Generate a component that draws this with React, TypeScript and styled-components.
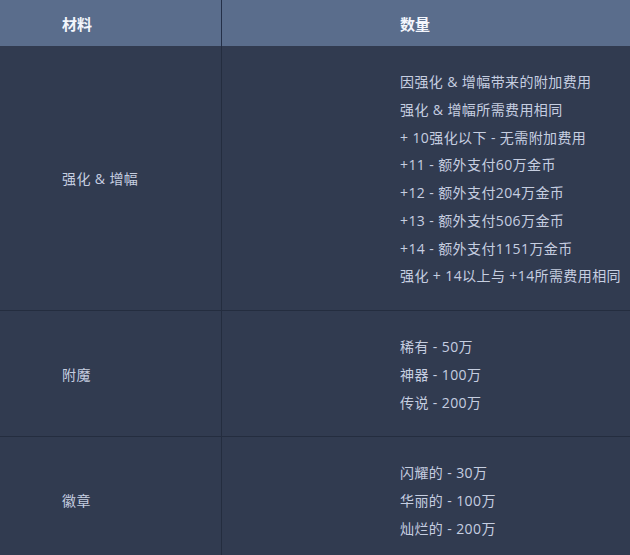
import styled, { createGlobalStyle } from 'styled-components';

const GlobalStyle = createGlobalStyle`
    html, body {
        margin: 0;
        padding: 0;
        background: #313b50;
    }
    body {
        font-family: 'Open Sans', 'Noto Sans CJK SC', sans-serif;
    }
`;

type Row = {
    name: string;
    lines: string[];
};

const rows: Row[] = [
    {
        name: '强化 & 增幅',
        lines: [
            '因强化 & 增幅带来的附加费用',
            '强化 & 增幅所需费用相同',
            '+ 10强化以下 - 无需附加费用',
            '+11 - 额外支付60万金币',
            '+12 - 额外支付204万金币',
            '+13 - 额外支付506万金币',
            '+14 - 额外支付1151万金币',
            '强化 + 14以上与 +14所需费用相同',
        ],
    },
    {
        name: '附魔',
        lines: ['稀有 - 50万', '神器 - 100万', '传说 - 200万'],
    },
    {
        name: '徽章',
        lines: ['闪耀的 - 30万', '华丽的 - 100万', '灿烂的 - 200万'],
    },
];

const App = () => {
    return (
        <>
            <GlobalStyle />
            <Table>
                <HeadRow>
                    <HeadCell>材料</HeadCell>
                    <HeadCell $wide>数量</HeadCell>
                </HeadRow>
                {rows.map((row) => (
                    <BodyRow key={row.name}>
                        <NameCell>{row.name}</NameCell>
                        <ValueCell>
                            {row.lines.map((line) => (
                                <Line key={line}>{line}</Line>
                            ))}
                        </ValueCell>
                    </BodyRow>
                ))}
            </Table>
        </>
    );
};

export default App;

const Table = styled.div`
    width: 630px;
    background: #313b50;
    display: flex;
    flex-direction: column;
`;

const HeadRow = styled.div`
    display: grid;
    grid-template-columns: 221px 1fr;
    height: 46px;
    background: #5a6d8c;
`;

const HeadCell = styled.div<{ $wide?: boolean }>`
    display: flex;
    align-items: center;
    padding-left: ${(p) => (p.$wide ? '178px' : '62px')};
    border-left: ${(p) => (p.$wide ? '1px solid #243048' : 'none')};
    color: #f3f6fc;
    font-size: 15px;
    font-weight: 700;
`;

const BodyRow = styled.div`
    display: grid;
    grid-template-columns: 221px 1fr;
    border-bottom: 1px solid #242d3f;
`;

const NameCell = styled.div`
    display: flex;
    align-items: center;
    padding-left: 62px;
    color: #c6cee0;
    font-size: 14px;
    letter-spacing: 0.4px;
`;

const ValueCell = styled.div`
    display: flex;
    flex-direction: column;
    padding: 22px 0 20px 178px;
    border-left: 1px solid #242d3f;
`;

const Line = styled.div`
    height: 27.75px;
    line-height: 27.75px;
    color: #c6cee0;
    font-size: 14px;
    letter-spacing: 0.4px;
    white-space: nowrap;
`;
